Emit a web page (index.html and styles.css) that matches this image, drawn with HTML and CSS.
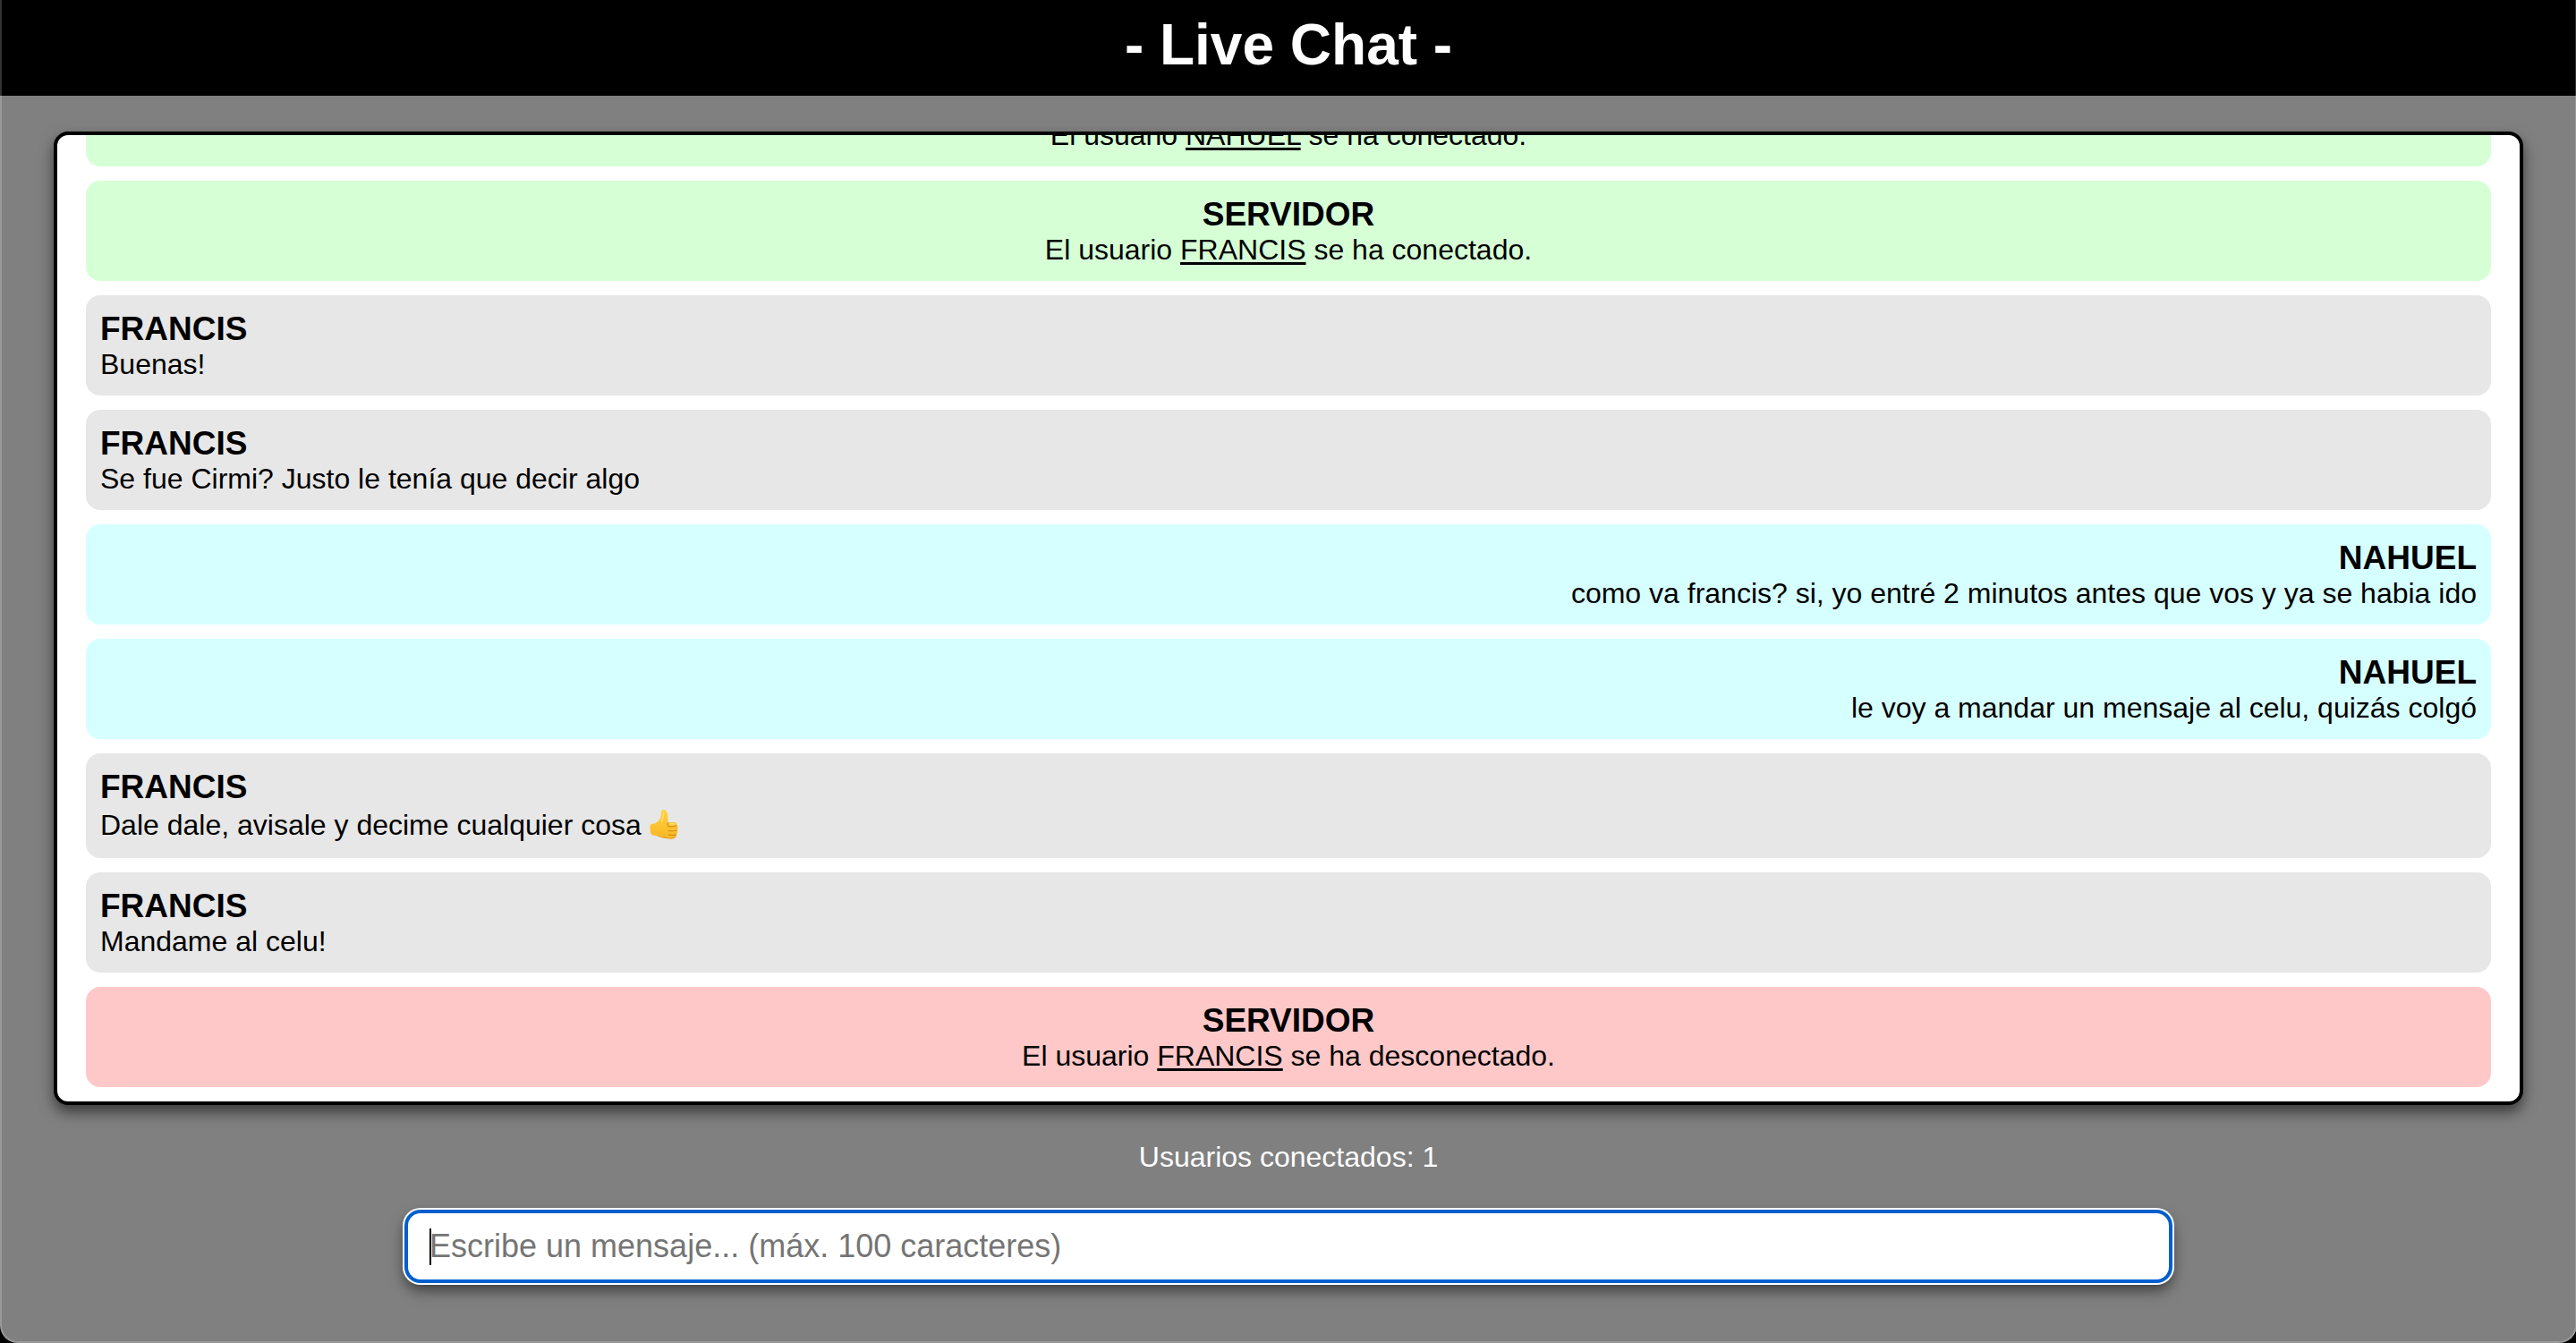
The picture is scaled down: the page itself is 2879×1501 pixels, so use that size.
FILE: index.html
```html
<!DOCTYPE html>
<html lang="es">
<head>
  <meta charset="utf-8">
  <meta name="viewport" content="width=device-width, initial-scale=1">
  <title>Live Chat</title>
  <link rel="stylesheet" href="styles.css">
</head>
<body>
  <div class="window">
    <header class="header">
      <h1 class="title">- Live Chat -</h1>
    </header>
    <main class="chat">
      <article class="message joined">
        <h2 class="author">SERVIDOR</h2>
        <p class="text">El usuario <u>NAHUEL</u> se ha conectado.</p>
      </article>
      <article class="message joined">
        <h2 class="author">SERVIDOR</h2>
        <p class="text">El usuario <u>FRANCIS</u> se ha conectado.</p>
      </article>
      <article class="message">
        <h2 class="author">FRANCIS</h2>
        <p class="text">Buenas!</p>
      </article>
      <article class="message">
        <h2 class="author">FRANCIS</h2>
        <p class="text">Se fue Cirmi? Justo le tenía que decir algo</p>
      </article>
      <article class="message own">
        <h2 class="author">NAHUEL</h2>
        <p class="text">como va francis? si, yo entré 2 minutos antes que vos y ya se habia ido</p>
      </article>
      <article class="message own">
        <h2 class="author">NAHUEL</h2>
        <p class="text">le voy a mandar un mensaje al celu, quizás colgó</p>
      </article>
      <article class="message">
        <h2 class="author">FRANCIS</h2>
        <p class="text">Dale dale, avisale y decime cualquier cosa <svg class="emoji" viewBox="2 0 40 42" role="img" aria-label="Pulgar arriba">
          <defs>
            <linearGradient id="skin" x1="0" y1="0" x2="0" y2="1">
              <stop offset="0" stop-color="#ffd23c"/>
              <stop offset="1" stop-color="#f9b826"/>
            </linearGradient>
          </defs>
          <path fill="url(#skin)" d="M2.500 23Q2.500 20 5 19.800L8.500 19.300Q13 16.500 14.500 12.500L15 6.500Q15.300 3.700 18 3.900Q21.500 4.500 22.300 10L22.600 18.200L29 17.800Q32.500 17.900 32.300 21Q34 22 33.600 24.300Q33.500 26 32.600 26.700Q33.600 28 33 30Q32.600 31.200 31.800 31.600Q32.300 33 31.200 34.500Q30 36.200 26 36.200L18 35.600Q14.500 35 11.500 33.200L5.500 32.500Q3.200 32 2.900 29Z"/>
          <path fill="none" stroke="#d98a17" stroke-width="1.200" stroke-linecap="round" d="M32 21.700Q28 23.500 23 22.700M32.400 27Q28 28.300 23 27.300M31.600 31.900Q28 33 23.300 31.800M23 22.700Q21.500 21 22.600 18.500"/>
          <path fill="none" stroke="#ffe680" stroke-width="1.200" stroke-linecap="round" d="M17.500 7Q17.500 13 15.500 17M25 19.900H30"/>
          <path fill="none" stroke="#e79c1c" stroke-linecap="round" d="M11.500 33.200Q17 35.800 26 36.200Q30 36.200 31.200 34.500"/>
        </svg></p>
      </article>
      <article class="message">
        <h2 class="author">FRANCIS</h2>
        <p class="text">Mandame al celu!</p>
      </article>
      <article class="message left">
        <h2 class="author">SERVIDOR</h2>
        <p class="text">El usuario <u>FRANCIS</u> se ha desconectado.</p>
      </article>
    </main>
    <footer class="footer">
      <p class="status">Usuarios conectados: 1</p>
      <input class="entry" type="text" maxlength="100" aria-label="Mensaje" placeholder="Escribe un mensaje... (máx. 100 caracteres)">
    </footer>
  </div>
</body>
</html>
```
FILE: styles.css
```css
* {
  box-sizing: border-box;
  margin: 0;
}

body {
  overflow: hidden;
  background: #000;
  color: #000;
  font-family: Arial, "Liberation Sans", sans-serif;
  font-size: 32px;
  line-height: 37px;
}

.window {
  position: relative;
  display: flex;
  flex-direction: column;
  height: 100vh;
  margin-right: -1px;
  overflow: hidden;
  background: #808080;
  border-radius: 0 0 20px 20px;
}

/* Translucent rim over the window's sides and bottom */
.window::after {
  content: "";
  position: absolute;
  inset: 0;
  border: 2px solid rgba(255, 255, 255, 0.2);
  border-top: 0;
  border-radius: inherit;
  pointer-events: none;
}

.header {
  padding: 14px 0 21px;
  background: #000;
  color: #fff;
  text-align: center;
}

.title {
  font-size: 64px;
  line-height: 72px;
}

.chat {
  display: flex;
  flex: 1;
  flex-direction: column;
  justify-content: flex-end;
  gap: 16px;
  min-height: 0;
  margin: 40px 60px 0;
  padding: 16px 32px;
  overflow: hidden;
  background: #fff;
  border: 4px solid #000;
  border-radius: 16px;
  box-shadow: 0 8px 16px rgba(0, 0, 0, 0.55);
}

.message {
  flex: none;
  padding: 16px;
  background: #e7e7e7;
  border-radius: 16px;
}

.joined,
.left {
  text-align: center;
}

.joined {
  background: #d6ffd6;
}

.left {
  background: #ffc8c8;
}

.own {
  background: #d6ffff;
  text-align: right;
}

.author {
  font-size: 37px;
  line-height: 43px;
}

.text u {
  text-decoration-thickness: 3px;
  text-underline-offset: 3px;
}

.emoji {
  width: 40px;
  height: 42px;
  vertical-align: -10px;
}

.footer {
  display: flex;
  flex-direction: column;
  align-items: center;
  gap: 40px;
  padding: 40px 0 67px;
}

.status {
  color: #fff;
}

/* The gradient draws the resting text cursor at the start of the field */
.entry {
  width: calc(100% - 904px);
  height: 82px;
  padding: 16px 24px;
  background: linear-gradient(#000, #000) 24px 50% / 2px 41px no-repeat #fff;
  border: 4px solid #005fcc;
  border-radius: 18px;
  outline: 0;
  box-shadow: 0 0 0 2px #fff, 0 8px 16px rgba(0, 0, 0, 0.55);
  font: inherit;
  font-size: 36px;
  line-height: 42px;
}

.entry::placeholder {
  color: #757575;
}
```
